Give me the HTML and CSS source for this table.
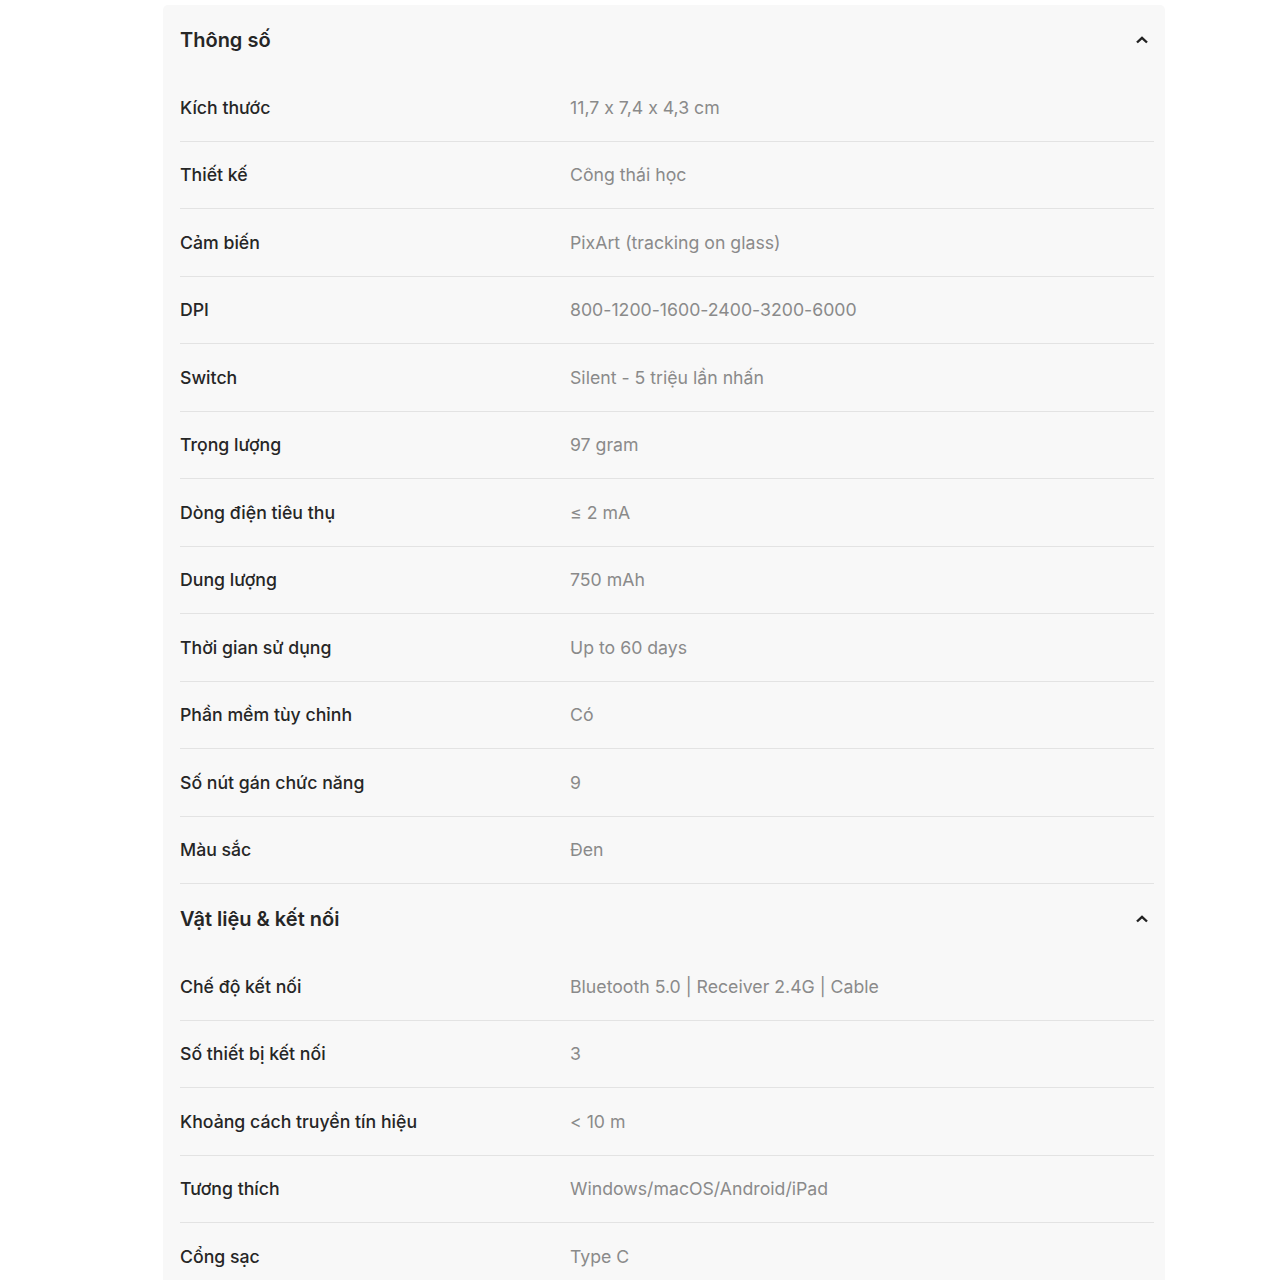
FILE: index.html
```html
<!DOCTYPE html>
<html lang="vi">
<head>
  <meta charset="UTF-8">
  <meta name="viewport" content="width=device-width, initial-scale=1.0">
  <title>Thông số</title>
  <link rel="stylesheet" href="styles.css">
</head>
<body>
  <div class="specs">
    <div class="group">
      <div class="group-head">
        <span class="group-title">Thông số</span>
        <svg class="chevron" width="14" height="10" viewBox="0 0 14 10"><path d="M2 7.5 L7 2.8 L12 7.5" fill="none" stroke="#222" stroke-width="2.4"/></svg>
      </div>
      <div class="row"><span class="label">Kích thước</span><span class="value">11,7 x 7,4 x 4,3 cm</span></div>
      <div class="row"><span class="label">Thiết kế</span><span class="value">Công thái học</span></div>
      <div class="row"><span class="label">Cảm biến</span><span class="value">PixArt (tracking on glass)</span></div>
      <div class="row"><span class="label">DPI</span><span class="value">800-1200-1600-2400-3200-6000</span></div>
      <div class="row"><span class="label">Switch</span><span class="value">Silent - 5 triệu lần nhấn</span></div>
      <div class="row"><span class="label">Trọng lượng</span><span class="value">97 gram</span></div>
      <div class="row"><span class="label">Dòng điện tiêu thụ</span><span class="value">≤ 2 mA</span></div>
      <div class="row"><span class="label">Dung lượng</span><span class="value">750 mAh</span></div>
      <div class="row"><span class="label">Thời gian sử dụng</span><span class="value">Up to 60 days</span></div>
      <div class="row"><span class="label">Phần mềm tùy chỉnh</span><span class="value">Có</span></div>
      <div class="row"><span class="label">Số nút gán chức năng</span><span class="value">9</span></div>
      <div class="row"><span class="label">Màu sắc</span><span class="value">Đen</span></div>
    </div>
    <div class="group">
      <div class="group-head">
        <span class="group-title">Vật liệu &amp; kết nối</span>
        <svg class="chevron" width="14" height="10" viewBox="0 0 14 10"><path d="M2 7.5 L7 2.8 L12 7.5" fill="none" stroke="#222" stroke-width="2.4"/></svg>
      </div>
      <div class="row"><span class="label">Chế độ kết nối</span><span class="value">Bluetooth 5.0 | Receiver 2.4G | Cable</span></div>
      <div class="row"><span class="label">Số thiết bị kết nối</span><span class="value">3</span></div>
      <div class="row"><span class="label">Khoảng cách truyền tín hiệu</span><span class="value">&lt; 10 m</span></div>
      <div class="row"><span class="label">Tương thích</span><span class="value">Windows/macOS/Android/iPad</span></div>
      <div class="row last"><span class="label">Cổng sạc</span><span class="value">Type C</span></div>
    </div>
  </div>
</body>
</html>
```

FILE: styles.css
```css
body {
  margin: 0;
  background: #fff;
  font-family: Inter, "Open Sans", sans-serif;
  font-feature-settings: "calt" 0;
  color: #222;
}

.specs {
  margin: 5px 0 0 163px;
  width: 1002px;
  box-sizing: border-box;
  padding: 0 11px 0 17px;
  background: #f8f8f8;
  border-radius: 5px 5px 0 0;
}

.group-head {
  height: 69px;
  display: flex;
  align-items: center;
  justify-content: space-between;
  padding-right: 5px;
}

.group-title {
  font-size: 20px;
  font-weight: 600;
  color: #262626;
}

.row {
  height: 67.5px;
  box-sizing: border-box;
  display: grid;
  grid-template-columns: 390px 1fr;
  align-items: center;
  border-bottom: 1.5px solid #e3e3e3;
}

.row.last {
  border-bottom: none;
}

.label {
  font-size: 17.7px;
  font-weight: 500;
  color: #262626;
}

.value {
  font-size: 17.7px;
  color: #8a8a8a;
}
```
